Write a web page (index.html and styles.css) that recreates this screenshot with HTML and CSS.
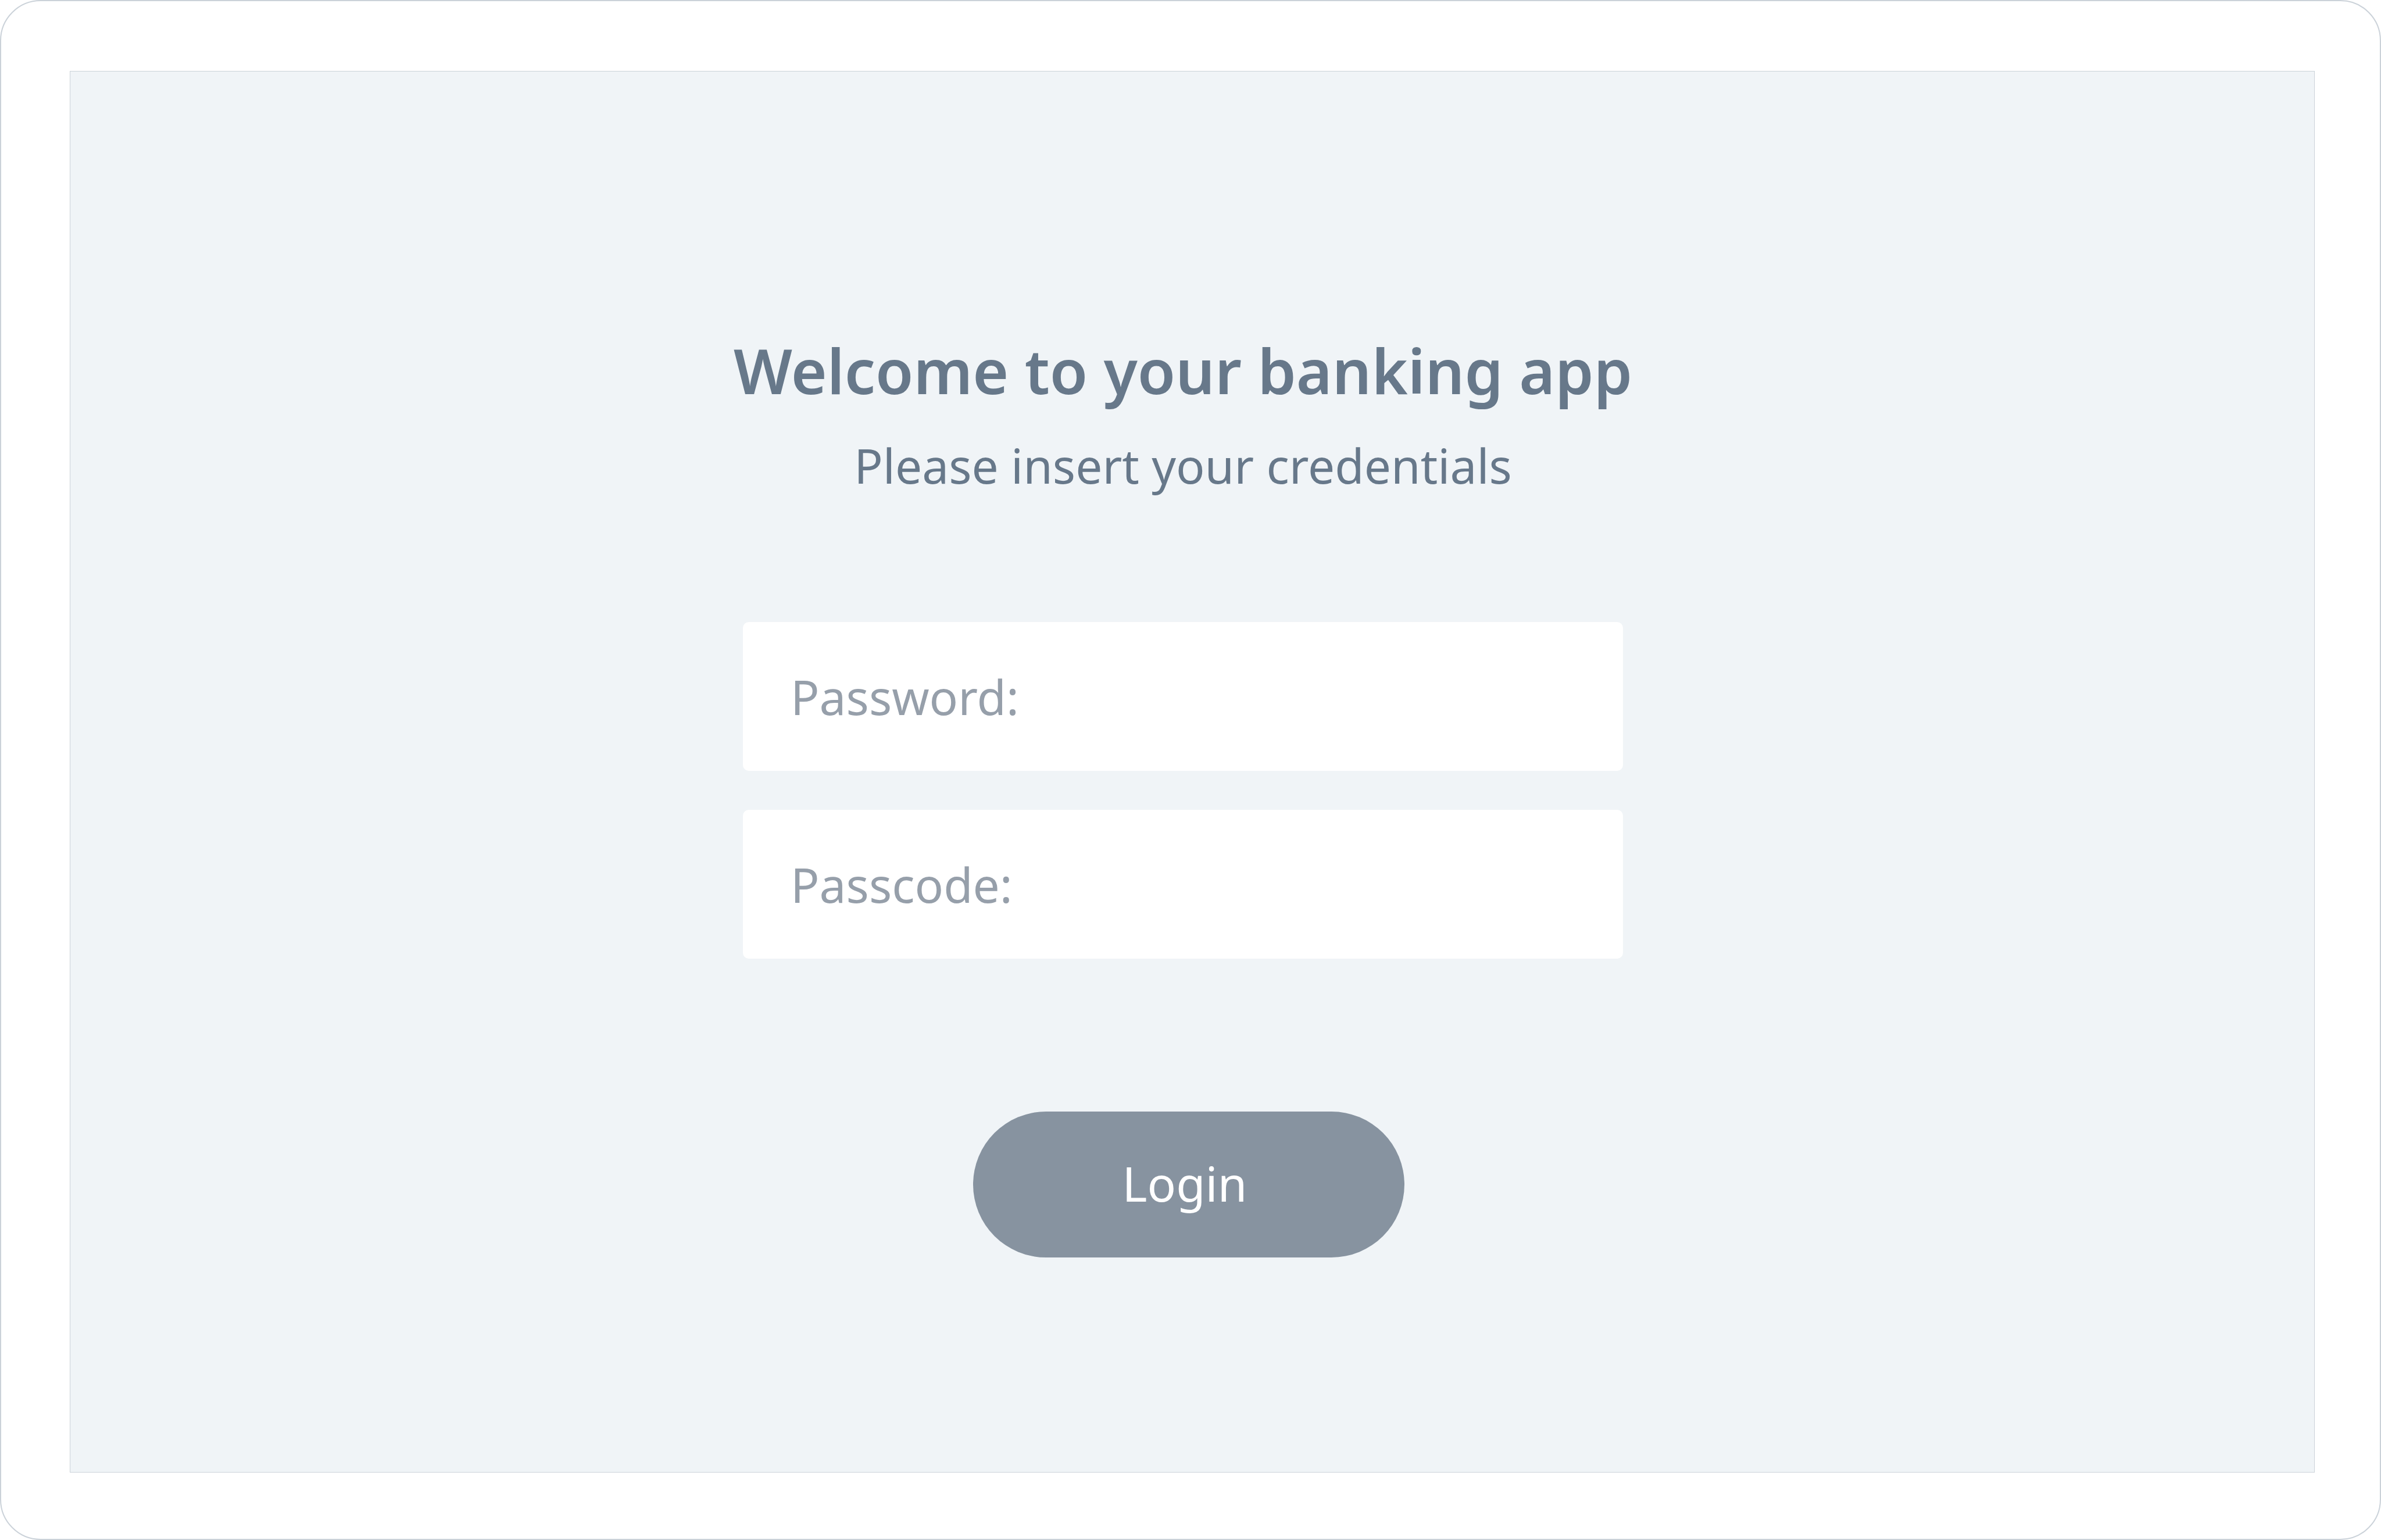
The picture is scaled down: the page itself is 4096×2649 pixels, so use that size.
FILE: index.html
```html
<!DOCTYPE html>
<html lang="en">
<head>
<meta charset="utf-8">
<meta name="viewport" content="width=device-width, initial-scale=1">
<title>Banking app – Login</title>
<link rel="stylesheet" href="styles.css">
</head>
<body>
<div class="frame">
  <main class="panel">
    <header class="intro">
      <h1 class="title">Welcome to your banking app</h1>
      <p class="subtitle">Please insert your credentials</p>
    </header>
    <form class="form">
      <input class="field" type="password" placeholder="Password:" aria-label="Password">
      <input class="field" type="password" placeholder="Passcode:" aria-label="Passcode">
      <button class="login" type="submit">Login</button>
    </form>
  </main>
</div>
</body>
</html>
```

FILE: styles.css
```css
* {
  box-sizing: border-box;
}

body {
  margin: 0;
  background: #ffffff;
  color: #67788a;
  font-family: "Noto Sans", "Open Sans", sans-serif;
  font-size: 82px;
  line-height: 110px;
}

.frame {
  display: flex;
  min-height: 100vh;
  padding: 120px 112px 114px 118px;
  border: 2px solid #cbd2d9;
  border-radius: 70px;
  background: #ffffff;
}

.panel {
  flex: 1;
  display: flex;
  flex-direction: column;
  align-items: center;
  padding: 442px 32px 0 0;
  border: 1px solid #cbd2d9;
  background: #f0f4f7;
}

.intro {
  text-align: center;
}

.title {
  margin: 0;
  font-size: 106px;
  font-weight: 600;
  line-height: 144px;
}

.subtitle {
  margin: 36px 0 0;
}

.form {
  display: flex;
  flex-direction: column;
  gap: 67px;
  width: 100%;
  max-width: 1514px;
  margin-top: 215px;
}

.field {
  width: 100%;
  height: 256px;
  padding: 0 82px;
  border: 0;
  border-radius: 10px;
  background: #ffffff;
  color: #67788a;
  font: inherit;
}

.field::placeholder {
  color: #969faa;
  opacity: 1;
}

.login {
  align-self: center;
  width: 742px;
  height: 251px;
  margin: 196px 0 0 20px;
  padding: 0 14px 6px 0;
  border: 0;
  border-radius: 126px;
  background: #8793a0;
  color: #ffffff;
  font: inherit;
}
```
